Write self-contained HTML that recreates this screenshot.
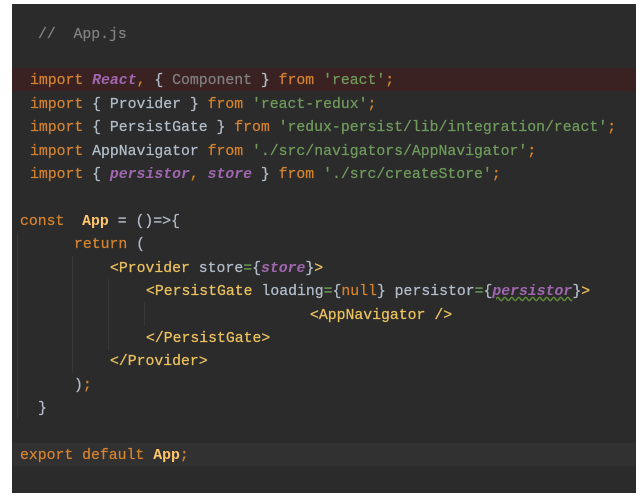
<!DOCTYPE html>
<html><head><meta charset="utf-8"><style>
html,body{margin:0;padding:0;background:#fff;width:644px;height:499px;overflow:hidden}
#p{position:absolute;left:12px;top:4px;width:624px;height:489px;background:#2b2b2b}
.l{position:absolute;white-space:pre;font-family:"Liberation Mono",monospace;font-size:14.8px;line-height:23px;color:#b2bdca;margin-top:2px;-webkit-text-stroke:0.25px currentColor}
.hl{position:absolute;left:12px;width:624px;height:23px}
.k{color:#d4832f}.s{color:#6f9a5c}.i{color:#a067b0;font-style:italic;font-weight:bold;-webkit-text-stroke:0}.g{color:#808080}.t{color:#ebc15e}.a{color:#ffc66d;font-weight:bold;-webkit-text-stroke:0}.e{color:#6a9a59}
.v{position:absolute;width:1px;background:#383838}
</style></head><body>
<div id="p"></div>
<div class="hl" style="top:68px;background:#3b2222"></div>
<div class="hl" style="top:443px;background:#313131"></div>
<div class="v" style="left:17px;top:233px;height:186px"></div>
<div class="v" style="left:72px;top:256px;height:117px"></div>
<div class="v" style="left:108px;top:279px;height:71px"></div>
<div class="v" style="left:144px;top:302px;height:24px"></div>
<div class="l g" style="left:38px;top:22px">//  App.js</div>
<div class="l" style="left:30px;top:68px"><span class="k">import</span> <span class="i">React</span><span class="k">,</span> { <span class="g">Component</span> } <span class="k">from</span> <span class="s">'react'</span><span class="k">;</span></div>
<div class="l" style="left:30px;top:92px"><span class="k">import</span> { Provider } <span class="k">from</span> <span class="s">'react-redux'</span><span class="k">;</span></div>
<div class="l" style="left:30px;top:115px"><span class="k">import</span> { PersistGate } <span class="k">from</span> <span class="s">'redux-persist/lib/integration/react'</span><span class="k">;</span></div>
<div class="l" style="left:30px;top:139px"><span class="k">import</span> AppNavigator <span class="k">from</span> <span class="s">'./src/navigators/AppNavigator'</span><span class="k">;</span></div>
<div class="l" style="left:30px;top:162px"><span class="k">import</span> { <span class="i">persistor</span><span class="k">,</span> <span class="i">store</span> } <span class="k">from</span> <span class="s">'./src/createStore'</span><span class="k">;</span></div>
<div class="l" style="left:20px;top:209px"><span class="k">const</span>  <span class="a">App</span> = ()=>{</div>
<div class="l" style="left:74px;top:232px"><span class="k">return</span> (</div>
<div class="l" style="left:110px;top:256px"><span class="t">&lt;Provider</span> store<span class="e">=</span>{<span class="i">store</span>}<span class="t">&gt;</span></div>
<div class="l" style="left:146px;top:279px"><span class="t">&lt;PersistGate</span> loading<span class="e">=</span>{<span class="k">null</span>} persistor<span class="e">=</span>{<span class="i" style="text-decoration:underline wavy #5f8c3a">persistor</span>}<span class="t">&gt;</span></div>
<div class="l t" style="left:310px;top:303px">&lt;AppNavigator /&gt;</div>
<div class="l t" style="left:146px;top:326px">&lt;/PersistGate&gt;</div>
<div class="l t" style="left:110px;top:349px">&lt;/Provider&gt;</div>
<div class="l" style="left:74px;top:373px">)<span class="k">;</span></div>
<div class="l" style="left:38px;top:396px">}</div>
<div class="l" style="left:20px;top:443px"><span class="k">export default</span> <span class="a">App</span><span class="k">;</span></div>
</body></html>
